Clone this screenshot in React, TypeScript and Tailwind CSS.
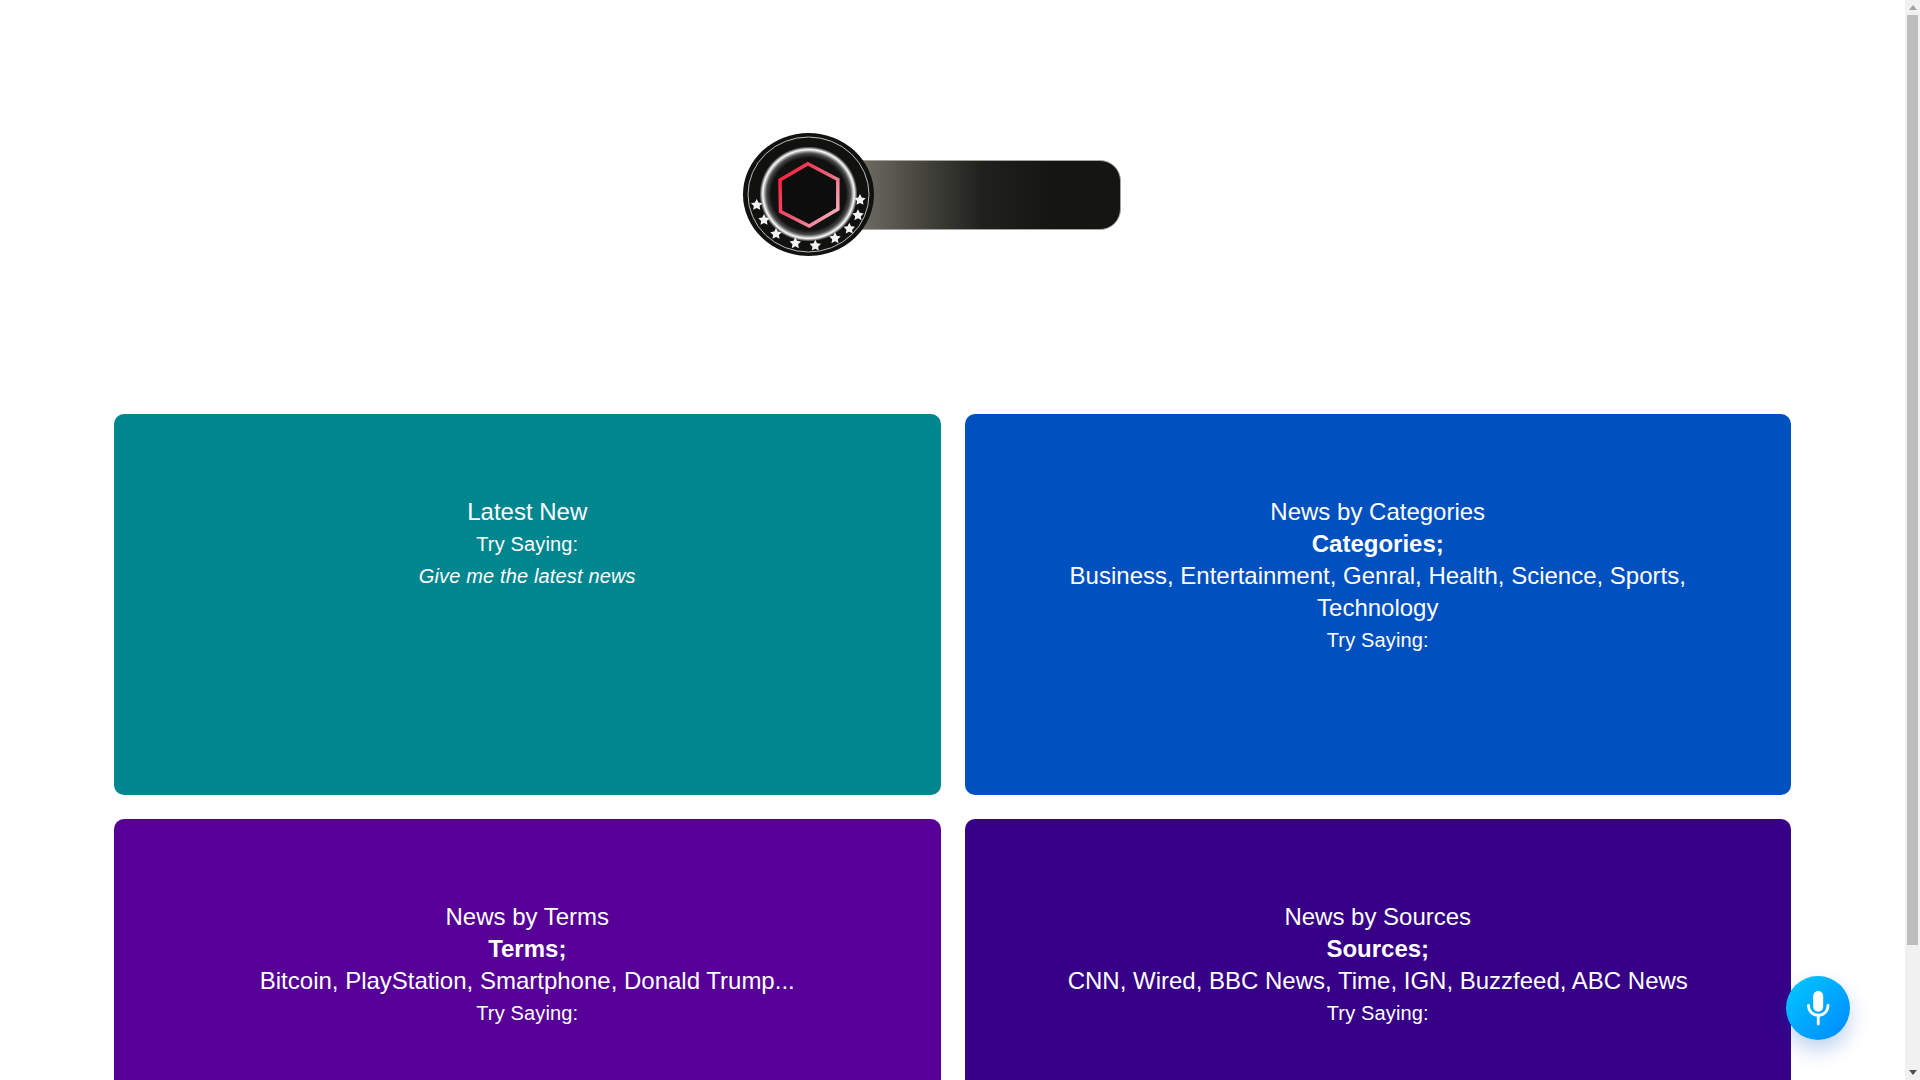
import React from "react";

const stars: [number, number][] = [
  [756.7, 205], [764, 220], [776, 234], [795.3, 243.3], [815.3, 245.7], [835, 238.3], [849.3, 228.7], [858, 215.3], [860, 200],
];

function starPoints(cx: number, cy: number, r: number) {
  const pts: string[] = [];
  for (let i = 0; i < 10; i++) {
    const a = -Math.PI / 2 + (i * Math.PI) / 5;
    const q = i % 2 === 0 ? r : r * 0.5;
    pts.push(`${(cx + q * Math.cos(a)).toFixed(2)},${(cy + q * Math.sin(a)).toFixed(2)}`);
  }
  return pts.join(" ");
}

function Logo() {
  return (
    <svg width="400" height="140" viewBox="730 125 400 140" className="block mr-[45px]">
      <defs>
        <linearGradient id="bar" x1="865" x2="1120" y1="0" y2="0" gradientUnits="userSpaceOnUse">
          <stop offset="0" stopColor="#6a6a61" />
          <stop offset="0.22" stopColor="#46463f" />
          <stop offset="0.46" stopColor="#20201d" />
          <stop offset="0.75" stopColor="#141412" />
          <stop offset="1" stopColor="#151513" />
        </linearGradient>
        <linearGradient id="hex" x1="780" x2="838" y1="180" y2="222" gradientUnits="userSpaceOnUse">
          <stop offset="0" stopColor="#ff2444" />
          <stop offset="0.45" stopColor="#ee5a75" />
          <stop offset="1" stopColor="#f7bcc6" />
        </linearGradient>
        <radialGradient id="glow">
          <stop offset="0.74" stopColor="#111110" />
          <stop offset="0.83" stopColor="#4a4a4a" />
          <stop offset="0.88" stopColor="#bbb" />
          <stop offset="0.905" stopColor="#fff" />
          <stop offset="0.93" stopColor="#aaa" />
          <stop offset="0.97" stopColor="#111110" />
        </radialGradient>
      </defs>
      <path d="M860 160.5H1100a20.5 20.5 0 0 1 20.5 20.5v28a20.5 20.5 0 0 1-20.5 20.5H860Z" fill="url(#bar)" stroke="#a5a59d" strokeWidth="1" />
      <ellipse cx="808.5" cy="194.5" rx="65.5" ry="61.5" fill="#111110" />
      <ellipse cx="808.5" cy="194.5" rx="60.5" ry="57.5" fill="none" stroke="#bdbdbd" strokeWidth="1" />
      <ellipse cx="808.5" cy="194" rx="50.5" ry="49" fill="url(#glow)" />
      <polygon points="807.8,163.8 837.8,179.5 837.8,209.3 809.2,226 780.5,211.5 780,180" fill="#0d0d0d" stroke="url(#hex)" strokeWidth="3.5" />
      {stars.map(([x, y]) => (
        <polygon key={`${x}-${y}`} points={starPoints(x, y, 6)} fill="#f2f2f2" />
      ))}
    </svg>
  );
}

function Card({ bg, children }: { bg: string; children: React.ReactNode }) {
  return (
    <div className={`${bg} h-[381px] rounded-[10px] px-[82px] pt-[82px] text-center text-white text-2xl leading-8`}>
      {children}
    </div>
  );
}

function Hint({ children }: { children?: React.ReactNode }) {
  return <div className="text-xl leading-8 tracking-[0.15px]">{children}</div>;
}

function MicIcon() {
  return (
    <svg width="64" height="64" viewBox="0 0 64 64" fill="none" className="block">
      <rect x="27.2" y="15" width="10" height="20.7" rx="5" fill="white" />
      <path d="M22.5 29.5a9.75 9.75 0 0 0 19.5 0" stroke="white" strokeWidth="2.8" strokeLinecap="round" />
      <path d="M32.25 40v8" stroke="white" strokeWidth="2.8" strokeLinecap="round" />
    </svg>
  );
}

function Scrollbar() {
  return (
    <div className="fixed top-0 right-0 bottom-0 w-[15px] bg-[#f1f1f1] flex flex-col items-center">
      <div className="h-[15px] w-full flex items-center justify-center">
        <svg width="8" height="5" viewBox="0 0 8 5" className="block"><path d="M4 0L8 5H0Z" fill="#a3a3a3" /></svg>
      </div>
      <div className="w-[11px] h-[930px] bg-[#bdbdbd]" />
      <div className="flex-1" />
      <div className="h-[15px] w-full flex items-center justify-center">
        <svg width="8" height="5" viewBox="0 0 8 5" className="block"><path d="M0 0H8L4 5Z" fill="#505050" /></svg>
      </div>
    </div>
  );
}

export default function App() {
  return (
    <div className="bg-white pr-[15px] pb-[19px] font-['Liberation_Sans',Arial,sans-serif]">
      <div className="h-[414px] flex justify-center pt-[125px] items-start">
        <Logo />
      </div>
      <div className="grid grid-cols-2 gap-6 px-[114px]">
        <Card bg="bg-[#00868f]">
          <div>Latest New</div>
          <Hint>Try Saying:</Hint>
          <Hint><em>Give me the latest news</em></Hint>
        </Card>
        <Card bg="bg-[#0050bf]">
          <div>News by Categories</div>
          <div className="font-bold">Categories;</div>
          <div>Business, Entertainment, Genral, Health, Science, Sports, Technology</div>
          <Hint>Try Saying:</Hint>
        </Card>
        <Card bg="bg-[#560098]">
          <div>News by Terms</div>
          <div className="font-bold">Terms;</div>
          <div>Bitcoin, PlayStation, Smartphone, Donald Trump...</div>
          <Hint>Try Saying:</Hint>
        </Card>
        <Card bg="bg-[#360087]">
          <div>News by Sources</div>
          <div className="font-bold">Sources;</div>
          <div>CNN, Wired, BBC News, Time, IGN, Buzzfeed, ABC News</div>
          <Hint>Try Saying:</Hint>
        </Card>
      </div>
      <button className="fixed right-[70px] bottom-[40px] w-16 h-16 rounded-full flex items-center justify-center bg-gradient-to-br from-[#00c8ff] to-[#0088ff] shadow-[0_10px_20px_rgba(0,80,200,0.25)]">
        <MicIcon />
      </button>
      <Scrollbar />
    </div>
  );
}
